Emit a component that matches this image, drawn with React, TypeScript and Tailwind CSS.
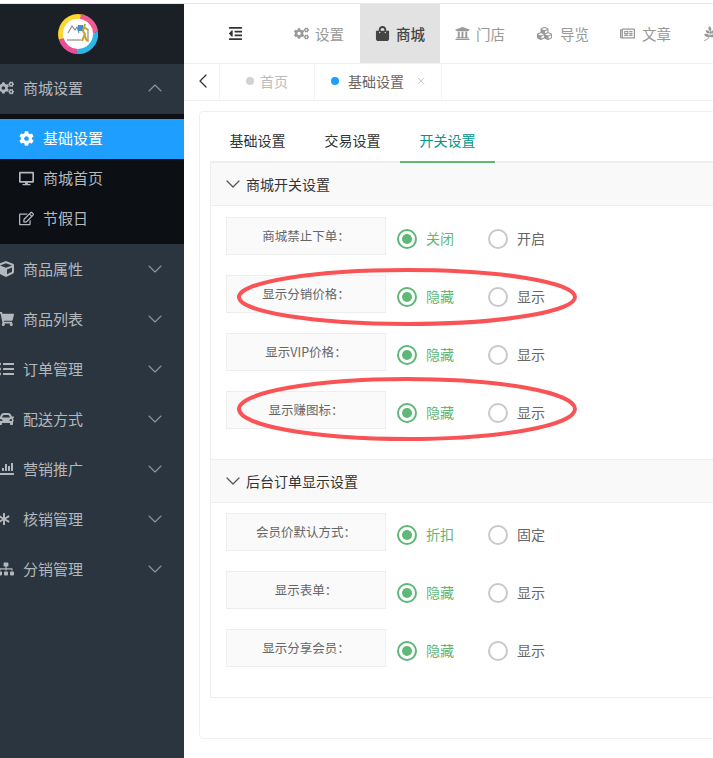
import { ReactNode } from 'react'
import { ChevronDown, ChevronLeft, ChevronUp, X } from 'lucide-react'
import {
  FaAsterisk,
  FaCar,
  FaChartBar,
  FaCog,
  FaCogs,
  FaCube,
  FaCubes,
  FaDesktop,
  FaListUl,
  FaOutdent,
  FaPagelines,
  FaRegEdit,
  FaRegNewspaper,
  FaShoppingBag,
  FaShoppingCart,
  FaSitemap,
  FaUniversity,
} from 'react-icons/fa'

const menus = [
  { label: '商品属性', icon: <FaCube /> },
  { label: '商品列表', icon: <FaShoppingCart /> },
  { label: '订单管理', icon: <FaListUl /> },
  { label: '配送方式', icon: <FaCar /> },
  { label: '营销推广', icon: <FaChartBar /> },
  { label: '核销管理', icon: <FaAsterisk className="text-[12px]" /> },
  { label: '分销管理', icon: <FaSitemap /> },
]

const topNav = [
  { label: '设置', icon: <FaCogs />, w: 'w-[81px]' },
  { label: '商城', icon: <FaShoppingBag />, w: 'w-[80px]', active: true },
  { label: '门店', icon: <FaUniversity />, w: 'w-[82px]' },
  { label: '导览', icon: <FaCubes className="mr-[2px]" />, w: 'w-[83px]' },
  { label: '文章', icon: <FaRegNewspaper className="mr-[1px]" />, w: 'w-[82px]' },
]

function Logo() {
  return (
    <svg width="40" height="40" viewBox="0 0 40 40">
      <circle cx="20" cy="20" r="17" fill="#fff" />
      <path d="M1 26 A20 20 0 0 1 20 0 L27 1 L23 5 A15 15 0 0 0 5.5 24 Z" fill="#fcd72f" />
      <path d="M23 .3 A20 20 0 0 1 40 17 L35 20 A15 15 0 0 0 22 5 Z" fill="#ef5a93" />
      <path d="M40 17 A20 20 0 0 1 18 40 L20 35 A15 15 0 0 0 35 20 Z" fill="#2fb4e6" />
      <path d="M18 40 A20 20 0 0 1 1 26 L5.5 24 A15 15 0 0 0 20 35 Z" fill="#ea4f96" />
      <path d="M10 19 L14 12 L17 16 L19 13 L21 19" fill="none" stroke="#8a8a94" strokeWidth="1.2" />
      <rect x="20" y="11" width="5" height="6" fill="#3d8fd0" />
      <path d="M27 10 L25 17 L27 20 L24 27 M26 20 L29 27 M26 13 L30 16" fill="none" stroke="#c9a22c" strokeWidth="2" />
      <path d="M9 26 H23 M30 15 V28" stroke="#777" strokeWidth="1" />
    </svg>
  )
}

function MenuRow({ label, icon, open }: { label: string; icon: ReactNode; open?: boolean }) {
  return (
    <div
      className={`flex h-[50px] items-center bg-[#2b3540] text-[15px] text-[#b4b8bd] ${
        open ? 'pb-[2px]' : 'pb-0'
      }`}
    >
      <span className="-ml-[2px] flex w-[25px] shrink-0 justify-start text-[16px]">{icon}</span>
      <span className="flex-1">{label}</span>
      <span className="mr-[17px] text-[#8f959b]">
        {open ? <ChevronUp size={24} strokeWidth={1.1} /> : <ChevronDown size={24} strokeWidth={1.1} />}
      </span>
    </div>
  )
}

function SubRow({ label, icon, active }: { label: string; icon: ReactNode; active?: boolean }) {
  return (
    <div
      className={`flex h-10 items-center pb-[1px] pl-[19px] text-[15px] ${
        active ? 'bg-[#1e9fff] text-white' : 'text-[#b4b8bd]'
      }`}
    >
      <span className="flex w-6 shrink-0 text-[15px]">{icon}</span>
      {label}
    </div>
  )
}

function Radio({ label, checked }: { label: string; checked?: boolean }) {
  return (
    <div className={`flex w-[91px] items-center gap-[9px] text-[14px] ${checked ? 'text-[#5fb878]' : 'text-[#666]'}`}>
      <span
        className={`flex h-5 w-5 items-center justify-center rounded-full border-2 ${
          checked ? 'border-[#5fb878]' : 'border-[#c9c9c9]'
        }`}
      >
        {checked && <span className="h-2.5 w-2.5 rounded-full bg-[#5fb878]" />}
      </span>
      {label}
    </div>
  )
}

function FormRow({ label, on, off }: { label: string; on: string; off: string }) {
  return (
    <div className="flex h-[38px] items-center">
      <div className="flex h-[38px] w-[160px] items-center justify-center border border-[#eee] bg-[#fafafa] text-[12.5px] text-[#666]">
        {label}：
      </div>
      <div className="ml-[11px] flex pt-[5px]">
        <Radio label={on} checked />
        <Radio label={off} />
      </div>
    </div>
  )
}

function SectionHead({ title }: { title: string }) {
  return (
    <div className="flex h-[43px] items-center gap-[1px] border-b border-[#eee] bg-[#f9f9f9] pl-[10px] text-[14px] text-[#333]">
      <ChevronDown size={24} strokeWidth={1.25} className="text-[#555]" />
      {title}
    </div>
  )
}

export default function App() {
  return (
    <div
      className="relative h-[758px] w-[713px] overflow-hidden bg-white"
      style={{ fontFamily: '"Noto Sans CJK SC", "Liberation Sans", sans-serif' }}
    >
      <div className="h-1 border-b border-[#e8e8e8]" />
      <div className="flex h-[754px]">
        {/* sidebar */}
        <aside className="h-full w-[184px] shrink-0 overflow-hidden bg-[#2b3540]">
          <div className="flex h-[60px] items-center bg-[#1b2027] pl-[58px]">
            <Logo />
          </div>
          <MenuRow label="商城设置" icon={<FaCogs />} open />
          <div className="h-[130px] bg-[#0c0f14] pt-[5px]">
            <SubRow label="基础设置" icon={<FaCog />} active />
            <SubRow label="商城首页" icon={<FaDesktop />} />
            <SubRow label="节假日" icon={<FaRegEdit />} />
          </div>
          {menus.map((m) => (
            <MenuRow key={m.label} label={m.label} icon={m.icon} />
          ))}
        </aside>

        <main className="min-w-0 flex-1">
          {/* top nav */}
          <div className="flex h-[60px] items-stretch border-b border-[#f0f0f0]">
            <div className="flex w-[95px] shrink-0 items-center pl-[44px] text-[15px] text-[#333]">
              <FaOutdent />
            </div>
            {topNav.map((n) => (
              <div
                key={n.label}
                className={`flex shrink-0 items-center gap-[6px] pl-[15px] text-[14.5px] ${n.w} ${
                  n.active ? 'bg-[#e2e2e2] font-medium text-[#444]' : 'text-[#999]'
                }`}
              >
                <span className="text-[15px]">{n.icon}</span>
                {n.label}
              </div>
            ))}
            <div className="flex shrink-0 items-center pl-[15px] text-[15px] text-[#999]">
              <FaPagelines />
            </div>
          </div>

          {/* page tabs */}
          <div className="flex h-[37px] items-stretch border-b border-[#f0f0f0] text-[14px]">
            <div className="flex w-[36px] items-center justify-center border-r border-[#f4f4f4] pb-[2px] pl-[2px] text-[#333]">
              <ChevronLeft size={24} strokeWidth={1.25} />
            </div>
            <div className="flex w-[95px] items-center justify-center gap-[6px] border-r border-[#f4f4f4] pb-[2px] text-[#bbb]">
              <span className="h-2 w-2 rounded-full bg-[#d2d2d2]" />
              首页
            </div>
            <div className="flex w-[127px] items-center justify-center gap-[9px] border-r border-[#f4f4f4] pb-[2px] pl-[2px] text-[#666]">
              <span className="h-2 w-2 rounded-full bg-[#1e9fff]" />
              基础设置
              <X size={12} className="ml-[2px] text-[#ccc]" />
            </div>
          </div>

          {/* card */}
          <div className="pl-[15px] pt-[10px]">
            <div className="h-[628px] w-[560px] rounded-[4px] border border-[#f0f0f0] pl-[10px]">
              <div className="flex h-[51px] border-b-2 border-[#eee] pt-[8px] text-[14px] text-[#333]">
                <div className="flex w-[95px] items-center justify-center">基础设置</div>
                <div className="flex w-[95px] items-center justify-center">交易设置</div>
                <div className="-mb-[2px] flex w-[95px] items-center justify-center border-b-2 border-[#5fb878] text-[#009688]">
                  开关设置
                </div>
              </div>
              <div className="h-[535px] border-b border-l border-[#eee]">
                <SectionHead title="商城开关设置" />
                <div className="flex h-[254px] flex-col gap-5 border-b border-[#eee] pl-[15px] pt-[11px]">
                  <FormRow label="商城禁止下单" on="关闭" off="开启" />
                  <FormRow label="显示分销价格" on="隐藏" off="显示" />
                  <FormRow label="显示VIP价格" on="隐藏" off="显示" />
                  <FormRow label="显示赚图标" on="隐藏" off="显示" />
                </div>
                <SectionHead title="后台订单显示设置" />
                <div className="flex flex-col gap-5 pl-[15px] pt-[10px]">
                  <FormRow label="会员价默认方式" on="折扣" off="固定" />
                  <FormRow label="显示表单" on="隐藏" off="显示" />
                  <FormRow label="显示分享会员" on="隐藏" off="显示" />
                </div>
              </div>
            </div>
          </div>
        </main>
      </div>

      {/* hand-drawn marks on the screenshot */}
      <svg className="pointer-events-none absolute left-[235px] top-[266px]" width="345" height="176" viewBox="0 0 345 176">
        <ellipse cx="172" cy="31" rx="168" ry="27" fill="none" stroke="#f95356" strokeWidth="4" />
        <ellipse cx="172" cy="143" rx="168" ry="30" fill="none" stroke="#f95356" strokeWidth="4" />
      </svg>
    </div>
  )
}
